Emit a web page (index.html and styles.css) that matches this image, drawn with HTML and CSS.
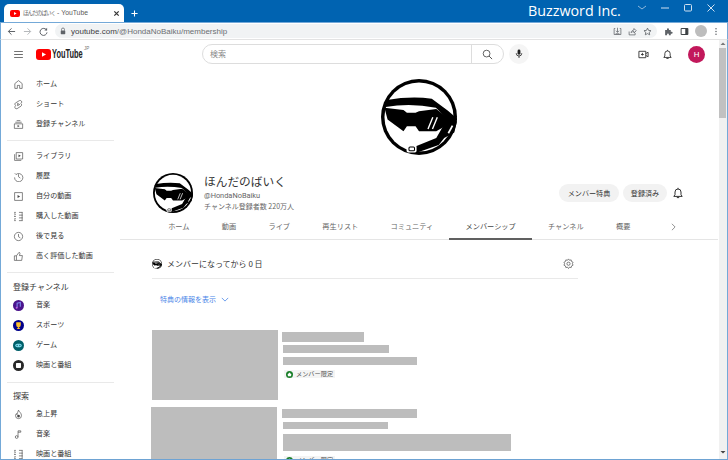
FILE: index.html
```html
<!DOCTYPE html>
<html lang="ja">
<head>
<meta charset="utf-8">
<title>ほんだのばいく - YouTube</title>
<link rel="stylesheet" href="styles.css">
</head>
<body>
<svg class="defs" width="0" height="0" aria-hidden="true">
  <symbol id="goggles" viewBox="65 35 220 220">
    <circle cx="175" cy="145" r="110" fill="#000"/>
    <circle cx="175" cy="145" r="100" fill="#fff"/>
    <path fill="#000" d="M82 96Q150 84 212 92L258 126L286 150L280 166L256 150L224 118Q150 104 78 116Z"/>
    <path fill="#000" d="M75 118L130 125L140 133L165 133L175 128L225 122L255 145L270 150L245 175L225 186L175 186L165 172L140 172L130 186L84 152Z"/>
    <path fill="#000" d="M258 146L285 158L277 190L248 206L232 226L170 248L140 240L175 226L225 206L240 180Z"/>
    <path fill="none" stroke="#fff" stroke-width="4" d="M215 146L201 180M228 146L214 180"/>
    <path fill="none" stroke="#fff" stroke-width="5" d="M260 192L272 170"/>
    <rect x="139" y="226" width="29" height="22" rx="5" fill="#fff"/>
    <rect x="146" y="232" width="16" height="11" rx="3" fill="none" stroke="#000" stroke-width="3"/>
  </symbol>
</svg>
<div class="window">
  <div class="titlebar">
    <div class="tab">
      <svg class="favicon" viewBox="0 0 10 7"><rect width="10" height="7" rx="2" fill="#f00"/><path d="M4 2v3l2.600-1.500z" fill="#fff"/></svg>
      <span class="tab-title"><span class="tab-title-ja">ほんだのばいく</span> - YouTube</span>
      <svg class="tab-close" viewBox="0 0 8 8"><path d="M1.500 1.500l5 5m0-5l-5 5" stroke="#333" stroke-width="1.400"/></svg>
    </div>
    <svg class="new-tab" viewBox="0 0 8 8"><path d="M4 .5v7M.5 4h7" stroke="#fff" stroke-width="1.200"/></svg>
    <div class="brand">Buzzword Inc.</div>
    <div class="win-controls">
      <svg viewBox="0 0 10 10"><path d="M1 3l4 3 4-3" fill="none" stroke="#8fb8dc"/></svg>
      <svg viewBox="0 0 10 10"><path d="M1 5h8" stroke="#cfe0f0"/></svg>
      <svg viewBox="0 0 10 10"><rect x="1.500" y="1.500" width="7" height="6.500" rx="1" fill="none" stroke="#cfe0f0"/></svg>
      <svg viewBox="0 0 10 10"><path d="M1.500 1.500l7 7m0-7l-7 7" stroke="#cfe0f0"/></svg>
    </div>
  </div>
  <div class="toolbar">
    <svg class="nav" viewBox="0 0 10 10"><path d="M9 5H1.500M5 1.500L1.500 5 5 8.500" fill="none" stroke="#5f6368" stroke-width="1.100"/></svg>
    <svg class="nav" viewBox="0 0 10 10"><path d="M1 5h7.500M5 1.500L8.500 5 5 8.500" fill="none" stroke="#b5b8bb" stroke-width="1.100"/></svg>
    <svg class="nav" viewBox="0 0 10 10"><path d="M8.300 3.300A3.900 3.900 0 1 0 8.900 6" fill="none" stroke="#5f6368" stroke-width="1.100"/><path d="M9 .8v3H6z" fill="#5f6368"/></svg>
    <div class="omnibox">
      <svg class="lock" viewBox="0 0 8 10"><path d="M2 4.500V3a2 2 0 0 1 4 0v1.500" fill="none" stroke="#5f6368"/><rect x="1" y="4.200" width="6" height="5" rx=".8" fill="#5f6368"/></svg>
      <span class="url"><span class="url-host">youtube.com</span>/@HondaNoBaiku/membership</span>
      <div class="omni-actions">
        <svg viewBox="0 0 12 12"><path d="M3 2H1.500v8h9V2H9M6 1v6M4 5l2 2.200L8 5M3.500 9h5" fill="none" stroke="#5f6368"/></svg>
        <svg viewBox="0 0 12 12"><path d="M1.500 6v4.500h8V8M4 7.500C4.500 5 6.500 4 8 4V2l3 3-3 3V6C6.500 6 5 6.500 4 7.500z" fill="none" stroke="#5f6368"/></svg>
        <svg viewBox="0 0 12 12"><path d="M6 1.500l1.400 3 3.300.4-2.400 2.200.6 3.300L6 8.800 3.100 10.400l.6-3.300L1.300 4.900l3.300-.4z" fill="none" stroke="#5f6368" stroke-width="1.100"/></svg>
      </div>
    </div>
    <svg class="ext" viewBox="0 0 12 12"><path d="M1.500 4H4V2.800a1.300 1.300 0 0 1 2.600 0V4H9v2.400h1.200a1.300 1.300 0 0 1 0 2.600H9v2H6.500V9.800a1.200 1.200 0 0 0-2.400 0V11H1.500z" fill="#5f6368"/></svg>
    <svg class="ext" viewBox="0 0 12 12"><path d="M1.500 2h9v8h-9z" fill="none" stroke="#3c4043" stroke-width="1.300"/><path d="M7 2h3.500v8H7z" fill="#3c4043"/></svg>
    <span class="profile"></span>
    <svg class="dots" viewBox="0 0 4 12"><circle cx="2" cy="2.200" r="1" fill="#5f6368"/><circle cx="2" cy="6" r="1" fill="#5f6368"/><circle cx="2" cy="9.800" r="1" fill="#5f6368"/></svg>
  </div>
  <div class="viewport">
    <div class="page">
      <header class="yt-header">
        <svg class="burger" viewBox="0 0 10 8"><path d="M0 .5h10M0 4h10M0 7.500h10" stroke="#444" stroke-width=".9"/></svg>
        <div class="yt-logo">
          <svg viewBox="0 0 15 11"><rect width="15" height="11" rx="3" fill="#f00"/><path d="M6 3.200v4.600L10 5.500z" fill="#fff"/></svg>
          <span class="yt-word">YouTube</span><sup class="yt-jp">JP</sup>
        </div>
        <div class="search">
          <div class="search-input">検索</div>
          <div class="search-btn"><svg viewBox="0 0 12 12"><circle cx="5" cy="5" r="3.700" fill="none" stroke="#444" stroke-width=".9"/><path d="M7.700 7.700l3.300 3.300" stroke="#444"/></svg></div>
        </div>
        <div class="mic"><svg viewBox="0 0 10 12"><rect x="3.200" y="0.500" width="3.600" height="6.500" rx="1.800" fill="#222"/><path d="M1.500 5a3.500 3.500 0 0 0 7 0M5 8.500V11" fill="none" stroke="#222"/></svg></div>
        <div class="yt-actions">
          <svg viewBox="0 0 12 12"><path d="M1 2.500h7.500v7H1zM8.500 5l2.500-1.500v5L8.500 7" fill="none" stroke="#333"/><path d="M4.800 4.200v3M3.300 6h3" stroke="#333"/></svg>
          <svg viewBox="0 0 12 12"><path d="M2 9.200h8L8.900 7.600V5A2.900 2.900 0 0 0 3.100 5v2.600zM4.800 10.300h2.400" fill="none" stroke="#333"/><path d="M6 1v1" stroke="#333"/></svg>
          <span class="yt-avatar">H</span>
        </div>
      </header>
      <div class="yt-body">
        <nav class="sidebar">
          <a class="side-row"><svg class="side-icon" viewBox="0 0 24 24"><path d="M12 3.500L4 10v10.500h5.500V14h5v6.500H20V10z"/></svg>ホーム</a>
          <a class="side-row"><svg class="side-icon" viewBox="0 0 24 24"><path d="M5 9l9-5.500c3-1.500 6.500 2 4.500 5L17 10c2 1 2.500 4 .5 5.500L9 21c-3 1.500-6.500-2-4.500-5L6 14C4 13 3 10.500 5 9z"/><path d="M10 9.500v5l4.500-2.500z"/></svg>ショート</a>
          <a class="side-row"><svg class="side-icon" viewBox="0 0 24 24"><path d="M8 3.500h8M5 7h14M3 10.500h18v10H3z"/><path d="M10 13v5l4.500-2.500z" class="solid"/></svg>登録チャンネル</a>
          <hr class="side-rule">
          <a class="side-row"><svg class="side-icon" viewBox="0 0 24 24"><path d="M7 3.500h14v14H7zM3.500 7v13.500H18"/><path d="M12 7.500v6l5-3z" class="solid"/></svg>ライブラリ</a>
          <a class="side-row"><svg class="side-icon" viewBox="0 0 24 24"><path d="M4 5l2.500 2.800A9 9 0 1 1 3.500 14M12 7v5.500l4 3"/></svg>履歴</a>
          <a class="side-row"><svg class="side-icon" viewBox="0 0 24 24"><path d="M3.500 3.500h17v17h-17z"/><path d="M10 8.500v7l5.500-3.500z" class="solid"/></svg>自分の動画</a>
          <a class="side-row"><svg class="side-icon" viewBox="0 0 24 24"><path d="M3 3h3M3 7.500h3M3 12h3M3 16.500h3M3 21h3M4 3v3M4 10v3M4 18v3M13 3h8M13 21h8M13 9h8M13 15h8M20 3v18"/></svg>購入した動画</a>
          <a class="side-row"><svg class="side-icon" viewBox="0 0 24 24"><circle cx="12" cy="12" r="9"/><path d="M12 6.500v6l4 2.500"/></svg>後で見る</a>
          <a class="side-row"><svg class="side-icon" viewBox="0 0 24 24"><path d="M3 10.500h4.500v10H3zM7.500 10.500L13 3c2 0 2.500 2 2 3.500l-1 3.500h6.500l-1.500 10.500H7.500"/></svg>高く評価した動画</a>
          <hr class="side-rule side-rule-low">
          <h2 class="side-head">登録チャンネル</h2>
          <a class="side-row"><svg class="side-icon side-dot" viewBox="0 0 24 24"><circle cx="12" cy="12" r="12" fill="#4a148c"/><path d="M9 17V7l7-1.500v9" fill="none" stroke="#7c83e8" stroke-width="2.500"/><circle cx="8" cy="17" r="2.200" fill="#c05bd8"/></svg>音楽</a>
          <a class="side-row"><svg class="side-icon side-dot" viewBox="0 0 24 24"><circle cx="12" cy="12" r="12" fill="#00008b"/><path d="M7 5h10v6a5 5 0 0 1-10 0zM10.500 15h3v3h2v1.500h-7V18h2z" fill="#fbc02d"/></svg>スポーツ</a>
          <a class="side-row"><svg class="side-icon side-dot" viewBox="0 0 24 24"><circle cx="12" cy="12" r="12" fill="#00606a"/><rect x="5" y="8" width="14" height="8" rx="4" fill="#7fdcf0"/><circle cx="9" cy="12" r="1.400" fill="#00606a"/><circle cx="15" cy="12" r="1.400" fill="#00606a"/></svg>ゲーム</a>
          <a class="side-row"><svg class="side-icon side-dot" viewBox="0 0 24 24"><circle cx="12" cy="12" r="12" fill="#282828"/><rect x="6.500" y="6.500" width="11" height="11" rx="1.500" fill="#fff"/></svg>映画と番組</a>
          <hr class="side-rule side-rule-last">
          <h2 class="side-head side-head-tight">探索</h2>
          <a class="side-row"><svg class="side-icon" viewBox="0 0 24 24"><path d="M12 2.500c1 3.500 6.500 6 6.500 12a6.500 6.500 0 0 1-13 0c0-2 1-3.500 2-4.500l1 2.500c1-3 2-6.500 3.500-10z"/><circle cx="12" cy="15.500" r="3" class="solid"/></svg>急上昇</a>
          <a class="side-row"><svg class="side-icon" viewBox="0 0 24 24"><path d="M11 17V4h6v3h-6"/><circle cx="8" cy="17.500" r="3"/></svg>音楽</a>
          <a class="side-row"><svg class="side-icon" viewBox="0 0 24 24"><path d="M3 3h3M3 7.500h3M3 12h3M3 16.500h3M3 21h3M4 3v3M4 10v3M4 18v3M13 3h8M13 21h8M13 9h8M13 15h8M20 3v18"/></svg>映画と番組</a>
        </nav>
        <main class="content">
          <svg class="banner-logo"><use href="#goggles"/></svg>
          <section class="channel">
            <svg class="channel-avatar"><use href="#goggles"/></svg>
            <div class="channel-meta">
              <h1 class="channel-name">ほんだのばいく</h1>
              <div class="channel-handle">@HondaNoBaiku</div>
              <div class="channel-subs">チャンネル登録者数 220万人</div>
            </div>
            <div class="channel-actions">
              <button class="pill pill-wide">メンバー特典</button>
              <button class="pill">登録済み</button>
              <svg class="channel-bell" viewBox="0 0 12 12"><path d="M1.800 9.400h8.400L9 7.700V5A3 3 0 0 0 3 5v2.700zM4.800 10.600h2.400M6 .8V2" fill="none" stroke="#333"/></svg>
            </div>
          </section>
          <div class="tabs">
            <a class="tab-link">ホーム</a>
            <a class="tab-link">動画</a>
            <a class="tab-link">ライブ</a>
            <a class="tab-link">再生リスト</a>
            <a class="tab-link">コミュニティ</a>
            <a class="tab-link tab-active">メンバーシップ</a>
            <a class="tab-link">チャンネル</a>
            <a class="tab-link">概要</a>
            <svg class="tab-more" viewBox="0 0 6 10"><path d="M1 1l4 4-4 4" fill="none" stroke="#777"/></svg>
          </div>
          <section class="membership">
            <div class="member-row">
              <svg class="member-avatar"><use href="#goggles"/></svg>
              <span class="member-text">メンバーになってから 0 日</span>
              <svg class="gear" viewBox="0 0 24 24"><path d="M12 2l2.200 3 3.600-.9.900 3.600 3.300 1.700L20.400 12.500l1.600 3.100-3.300 1.700-.9 3.600-3.600-.9L12 23l-2.200-3-3.600.9-.9-3.600L2 15.600l1.600-3.100L2 9.400l3.300-1.700.9-3.600 3.600.9z" fill="none" stroke="#555" stroke-width="1.600"/><circle cx="12" cy="12.500" r="3.500" fill="none" stroke="#555" stroke-width="1.600"/></svg>
            </div>
            <div class="perks">特典の情報を表示<svg viewBox="0 0 10 6"><path d="M1 1l4 4 4-4" fill="none" stroke="#4a86e8"/></svg></div>
            <article class="card">
              <div class="thumb"></div>
              <div class="card-meta">
                <div class="bar bar-a1"></div>
                <div class="bar bar-a2"></div>
                <div class="bar bar-a3"></div>
                <div class="badge"><svg viewBox="0 0 8 8"><circle cx="4" cy="4" r="4" fill="#1b7f2a"/><path d="M4 1.800L6.200 4 5.600 6H2.400L1.800 4z" fill="#fff"/></svg>メンバー限定</div>
              </div>
            </article>
            <article class="card card-second">
              <div class="thumb"></div>
              <div class="card-meta">
                <div class="bar bar-b1"></div>
                <div class="bar bar-b2"></div>
                <div class="bar bar-b3"></div>
                <div class="badge"><svg viewBox="0 0 8 8"><circle cx="4" cy="4" r="4" fill="#1b7f2a"/><path d="M4 1.800L6.200 4 5.600 6H2.400L1.800 4z" fill="#fff"/></svg>メンバー限定</div>
              </div>
            </article>
          </section>
        </main>
      </div>
    </div>
    <div class="scrollbar">
      <svg class="sb-arrow" viewBox="0 0 8 8"><path d="M1.500 5L4 2.500 6.500 5z" fill="#777"/></svg>
      <div class="sb-thumb"></div>
      <svg class="sb-arrow sb-arrow-end" viewBox="0 0 8 8"><path d="M1.500 3L4 5.500 6.500 3z" fill="#444"/></svg>
    </div>
  </div>
</div>
</body>
</html>
```
FILE: styles.css
```css
* { box-sizing: border-box; }
html, body { margin: 0; padding: 0; width: 728px; height: 460px; overflow: hidden; background: #fff; }
body { font-family: "Noto Sans CJK JP", "Noto Sans", "Liberation Sans", sans-serif; color: #333; }
.defs { display: block; height: 0; }
svg { display: block; flex: none; }
.window { width: 728px; height: 460px; display: flex; flex-direction: column; background: #0063b1; border-bottom: 1px solid #6ea3d3; }

/* browser chrome */
.titlebar { height: 22px; flex: none; display: flex; align-items: flex-end; padding-left: 4px; }
.tab { width: 120px; height: 18px; background: #fff; border-radius: 5px 5px 0 0; display: flex; align-items: center; padding: 0 4px 0 6px; }
.favicon { width: 10px; height: 7px; margin-right: 3px; }
.tab-title { font-family: "Liberation Sans", sans-serif; font-size: 6.800px; color: #5a5a5a; white-space: nowrap; line-height: 10px; }
.tab-title-ja { font-family: "Noto Sans CJK JP", sans-serif; font-size: 5.500px; letter-spacing: -0.9px; }
.tab-close { width: 7px; height: 7px; margin-left: auto; }
.new-tab { width: 7px; height: 7px; margin: 0 0 5px 7px; }
.brand { font-family: "Open Sans", "Noto Sans", sans-serif; font-size: 14.300px; color: #fff; margin-left: 390px; line-height: 22px; width: 104px; white-space: nowrap; align-self: center; }
.win-controls { display: flex; gap: 13px; align-self: flex-start; margin: 3px 0 0 5px; }
.win-controls svg { width: 10px; height: 10px; }

.toolbar { height: 18px; flex: none; background: #fff; border-top: 1px solid #74a9d8; border-bottom: 1px solid #e3e3e3; border-left: 1px solid #74a9d8; border-right: 1px solid #74a9d8; display: flex; align-items: center; padding-left: 6px; }
.nav { width: 9px; height: 9px; margin-right: 7px; }
.omnibox { width: 602px; height: 14px; background: #f1f3f4; border-radius: 7px; display: flex; align-items: center; padding: 0 5px; }
.lock { width: 6px; height: 8px; margin-right: 5px; }
.url { font-family: "Liberation Sans", sans-serif; font-size: 8px; color: #6b6f73; white-space: nowrap; }
.url-host { color: #3c4043; }
.omni-actions { margin-left: auto; display: flex; gap: 6px; }
.omni-actions svg { width: 9px; height: 9px; }
.ext { width: 9px; height: 9px; margin-left: 7px; }
.profile { width: 12px; height: 12px; border-radius: 50%; background: #bdbdbd; margin-left: 6px; }
.dots { width: 4px; height: 9px; margin-left: 7px; }

.viewport { flex: 1; min-height: 0; display: flex; background: #fff; border-left: 1px solid #74a9d8; border-right: 1px solid #74a9d8; }
.page { flex: 1; min-width: 0; display: flex; flex-direction: column; }

/* youtube header */
.yt-header { height: 28px; flex: none; display: flex; align-items: center; padding-left: 13px; position: relative; }
.burger { width: 9px; height: 7px; margin-right: 13px; }
.yt-logo { display: flex; align-items: center; width: 166px; }
.yt-logo svg { width: 15px; height: 11px; }
.yt-word { display: block; width: 29px; font-family: "Liberation Sans", sans-serif; font-weight: 700; font-size: 13.500px; color: #222; line-height: 12px; margin-left: 1px; transform: scaleX(.55); transform-origin: left center; white-space: nowrap; }
.yt-jp { font-family: "Liberation Sans", sans-serif; font-size: 4.500px; color: #777; align-self: flex-start; margin: -2px 0 0 3px; line-height: 6px; }
.search { width: 302px; height: 20px; display: flex; border: 1px solid #ddd; border-radius: 10px; }
.search-input { flex: 1; font-size: 8px; line-height: 18px; color: #888; padding-left: 7px; }
.search-btn { width: 32px; border-left: 1px solid #ddd; display: flex; align-items: center; justify-content: center; }
.search-btn svg { width: 11px; height: 11px; }
.mic { width: 20px; height: 20px; border-radius: 50%; background: #f5f5f5; margin-left: 5px; display: flex; align-items: center; justify-content: center; }
.mic svg { width: 8px; height: 10px; }
.yt-actions { display: flex; align-items: center; margin-left: 109px; }
.yt-actions svg { width: 11px; height: 11px; margin-right: 13px; }
.yt-avatar { width: 17px; height: 17px; margin-left: 2px; border-radius: 50%; background: #c2185b; color: #fff; font: 8px/17px "Roboto", sans-serif; text-align: center; }

/* sidebar */
.yt-body { flex: 1; min-height: 0; display: flex; overflow: hidden; }
.sidebar { width: 119px; flex: none; padding-top: 6px; }
.side-row { height: 20px; display: flex; align-items: center; font-size: 7.100px; color: #333; white-space: nowrap; padding: 0 0 2px 12px; }
.side-icon { width: 11px; height: 11px; margin: 2px 12px 0 0; fill: none; stroke: #444; stroke-width: 1.400; }
.side-icon .solid { fill: #444; stroke: none; }
.side-dot { stroke: none; }
.side-rule { margin: 6px 6px 5px; border: 0; border-top: 1px solid #e9e9e9; height: 0; }
.side-rule-low { margin-bottom: 0; }
.side-rule-last { margin: 7px 6px 0; }
.side-head { margin: 0; padding: 7px 0 1px 12px; font-size: 8px; line-height: 14px; font-weight: 400; color: #333; }
.side-head-tight { padding-top: 6px; }

/* channel */
.content { width: 598px; flex: none; padding-top: 11px; }
.banner-logo { width: 76px; height: 76px; margin: 0 auto; }
.channel { height: 40px; margin-top: 18px; padding: 0 34px 0 33px; display: flex; align-items: center; }
.channel-avatar { width: 40px; height: 40px; margin-right: 11px; }
.channel-meta { display: flex; flex-direction: column; align-self: flex-start; }
.channel-name { margin: 0; font-size: 11.700px; line-height: 15px; font-weight: 400; color: #333; }
.channel-handle { font-family: "Roboto", sans-serif; font-size: 7.400px; line-height: 10px; color: #666; margin-top: 3px; }
.channel-subs { font-size: 7px; line-height: 10px; color: #666; }
.channel-actions { margin-left: auto; display: flex; align-items: center; gap: 4px; }
.pill { height: 18px; width: 44px; padding: 0; border: 0; border-radius: 9px; background: #f2f2f2; font-family: inherit; font-size: 7.100px; color: #333; }
.pill-wide { width: 60px; }
.channel-bell { width: 12px; height: 12px; margin-left: 1px; }

.tabs { height: 24px; margin-top: 3px; padding: 0 42px 0 32px; display: flex; align-items: stretch; border-bottom: 1px solid #e5e5e5; }
.tab-link { padding: 0 16.150px; font-size: 7.200px; line-height: 21px; color: #666; white-space: nowrap; }
.tab-active { color: #444; border-bottom: 2px solid #606060; height: 24px; }
.tab-more { width: 5px; height: 8px; margin: 7px 0 0 auto; }

/* membership */
.membership { padding-left: 32px; }
.member-row { width: 426px; height: 39px; display: flex; align-items: center; border-bottom: 1px solid #e9e9e9; padding: 9px 4px 0 0; }
.member-avatar { width: 10px; height: 10px; margin-right: 5px; }
.member-text { font-size: 8px; color: #333; }
.gear { width: 11px; height: 11px; margin-left: auto; }
.perks { height: 14px; margin: 13px 0 0 8px; display: flex; align-items: center; font-size: 7px; color: #4a86e8; }
.perks svg { width: 8px; height: 5px; margin-left: 5px; }
.card { margin-top: 24px; display: flex; }
.card-second { margin: 7px 0 0 -1px; }
.thumb { width: 126px; height: 70px; flex: none; background: #bdbdbd; }
.card-meta { padding: 2px 0 0 4px; display: flex; flex-direction: column; align-items: flex-start; }
.card-second .card-meta { padding-left: 5px; }
.bar { background: #bdbdbd; }
.bar-a1 { width: 82px; height: 10px; }
.bar-a2 { width: 106px; height: 8px; margin: 3px 0 0 1px; }
.bar-a3 { width: 134px; height: 8px; margin: 4px 0 0 1px; }
.bar-b1 { width: 135px; height: 9px; }
.bar-b2 { width: 105px; height: 7px; margin: 4px 0 0 1px; }
.bar-b3 { width: 228px; height: 17px; margin: 5px 0 0 1px; }
.badge { height: 8px; width: 51px; margin: 5px 0 0 2px; background: #f4f4f4; display: flex; align-items: center; gap: 3px; padding-left: 2px; font-size: 6.200px; line-height: 8px; color: #555; white-space: nowrap; }
.badge svg { width: 7px; height: 7px; }

/* scrollbar */
.scrollbar { width: 8px; flex: none; background: #f1f1f1; display: flex; flex-direction: column; }
.sb-arrow { width: 8px; height: 8px; }
.sb-thumb { width: 7px; height: 70px; background: #c1c1c1; }
.sb-arrow-end { margin-top: auto; margin-bottom: 3px; }
```
